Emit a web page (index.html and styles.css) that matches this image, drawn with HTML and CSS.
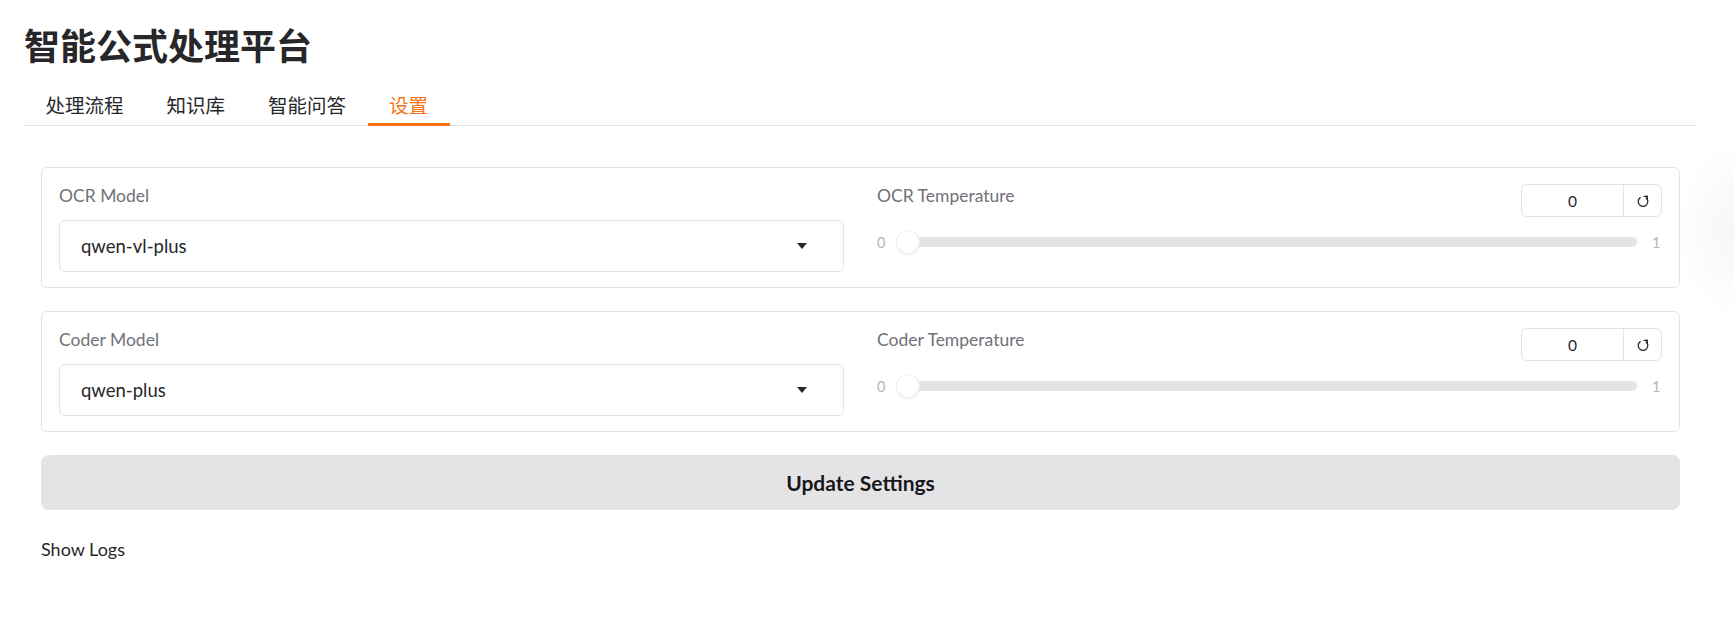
FILE: index.html
```html
<!DOCTYPE html>
<html lang="zh">
<head>
<meta charset="utf-8">
<title>智能公式处理平台</title>
<link rel="stylesheet" href="styles.css">
</head>
<body>
<div class="app">
  <h1 class="title">智能公式处理平台</h1>
  <div class="tabs">
    <button class="tab">处理流程</button>
    <button class="tab">知识库</button>
    <button class="tab">智能问答</button>
    <button class="tab active">设置</button>
  </div>
  <div class="tab-body">
    <div class="panel">
      <div class="col">
        <div class="label">OCR Model</div>
        <div class="dropdown"><span>qwen-vl-plus</span><span class="caret"></span></div>
      </div>
      <div class="col">
        <div class="slider-head">
          <div class="label">OCR Temperature</div>
          <div class="numbox">
            <span class="num">0</span>
            <span class="reset"><svg viewBox="0 0 16 16" width="16" height="16"><path d="M5.2 4.6 A4.8 4.8 0 1 0 11.2 4.9" fill="none" stroke="#27272a" stroke-width="1.3" stroke-linecap="round"/><path d="M9.2 3.4 L12.4 3.2 L12.2 6.4" fill="none" stroke="#27272a" stroke-width="1.3" stroke-linecap="round" stroke-linejoin="round"/></svg></span>
          </div>
        </div>
        <div class="slider-row">
          <span class="bound">0</span>
          <div class="track"><span class="thumb"></span></div>
          <span class="bound">1</span>
        </div>
      </div>
    </div>
    <div class="panel">
      <div class="col">
        <div class="label">Coder Model</div>
        <div class="dropdown"><span>qwen-plus</span><span class="caret"></span></div>
      </div>
      <div class="col">
        <div class="slider-head">
          <div class="label">Coder Temperature</div>
          <div class="numbox">
            <span class="num">0</span>
            <span class="reset"><svg viewBox="0 0 16 16" width="16" height="16"><path d="M5.2 4.6 A4.8 4.8 0 1 0 11.2 4.9" fill="none" stroke="#27272a" stroke-width="1.3" stroke-linecap="round"/><path d="M9.2 3.4 L12.4 3.2 L12.2 6.4" fill="none" stroke="#27272a" stroke-width="1.3" stroke-linecap="round" stroke-linejoin="round"/></svg></span>
          </div>
        </div>
        <div class="slider-row">
          <span class="bound">0</span>
          <div class="track"><span class="thumb"></span></div>
          <span class="bound">1</span>
        </div>
      </div>
    </div>
    <button class="update">Update Settings</button>
    <div class="logs">Show Logs</div>
  </div>
</div>
<div class="edge-shadow"></div>
</body>
</html>
```
FILE: styles.css
```css
* { box-sizing: border-box; }
body {
  margin: 0;
  background: #ffffff;
  font-family: Lato, "Noto Sans CJK SC", sans-serif;
  color: #27272a;
  overflow: hidden;
}
.app {
  padding: 22px 38px 0 24px;
}
.title {
  margin: 0;
  font-family: "Noto Sans CJK SC", sans-serif;
  font-size: 36px;
  line-height: 44px;
  font-weight: 700;
  color: #27272a;
}
.tabs {
  margin-top: 19px;
  display: flex;
  border-bottom: 1px solid #e4e4e7;
}
.tab {
  background: none;
  border: none;
  padding: 0 21.5px;
  height: 41px;
  font-family: "Noto Sans CJK SC", sans-serif;
  font-size: 19.5px;
  color: #27272a;
  border-bottom: 3px solid transparent;
  margin-bottom: -1px;
}
.tab.active {
  color: #f97316;
  border-bottom-color: #f97316;
}
.tab-body {
  padding: 41px 16px 0 17px;
}
.panel {
  border: 1px solid #e4e4e7;
  border-radius: 6px;
  padding: 16px 17px 15px;
  display: grid;
  grid-template-columns: 1fr 1fr;
  column-gap: 33px;
  margin-bottom: 23px;
}
.label {
  font-size: 17.5px;
  line-height: 24px;
  color: #71717a;
}
.dropdown {
  margin-top: 12px;
  height: 52px;
  border: 1px solid #e4e4e7;
  border-radius: 6px;
  display: flex;
  align-items: center;
  justify-content: space-between;
  padding: 0 36px 0 21px;
  font-size: 18.5px;
  color: #27272a;
}
.caret {
  width: 0;
  height: 0;
  border-left: 5.5px solid transparent;
  border-right: 5.5px solid transparent;
  border-top: 6px solid #27272a;
}
.slider-head {
  display: flex;
  justify-content: space-between;
  align-items: flex-start;
}
.numbox {
  display: flex;
  height: 33px;
  border: 1px solid #e4e4e7;
  border-radius: 6px;
  font-size: 15.5px;
}
.num {
  width: 102px;
  display: flex;
  align-items: center;
  justify-content: center;
  border-right: 1px solid #e4e4e7;
}
.reset {
  width: 37px;
  display: flex;
  align-items: center;
  justify-content: center;
}
.slider-row {
  display: flex;
  align-items: center;
  margin-top: 8px;
  height: 34px;
}
.bound {
  font-size: 14.5px;
  color: #b4b4bb;
  width: 10px;
}
.bound:first-child { margin-right: 10px; }
.bound:last-child { margin-left: 15px; }
.track {
  flex: 1;
  height: 10px;
  border-radius: 5px;
  background: #e4e4e7;
  position: relative;
}
.thumb {
  position: absolute;
  left: 0;
  top: 50%;
  width: 22px;
  height: 22px;
  margin-top: -11px;
  border-radius: 50%;
  background: #ffffff;
  box-shadow: 0 0 0 1px #eeeef0, 0 1px 3px rgba(0,0,0,0.10);
}
.update {
  display: block;
  width: 100%;
  height: 55px;
  border: none;
  border-radius: 8px;
  background: #e4e4e7;
  font-family: Lato, sans-serif;
  font-weight: 700;
  font-size: 21px;
  color: #18181b;
}
.logs {
  margin-top: 27px;
  font-size: 18px;
  line-height: 24px;
  color: #27272a;
}
.edge-shadow {
  position: absolute;
  right: 0;
  top: 140px;
  width: 60px;
  height: 180px;
  background: radial-gradient(ellipse at 100% 50%, rgba(0,0,0,0.035), rgba(0,0,0,0) 70%);
  pointer-events: none;
}
```
